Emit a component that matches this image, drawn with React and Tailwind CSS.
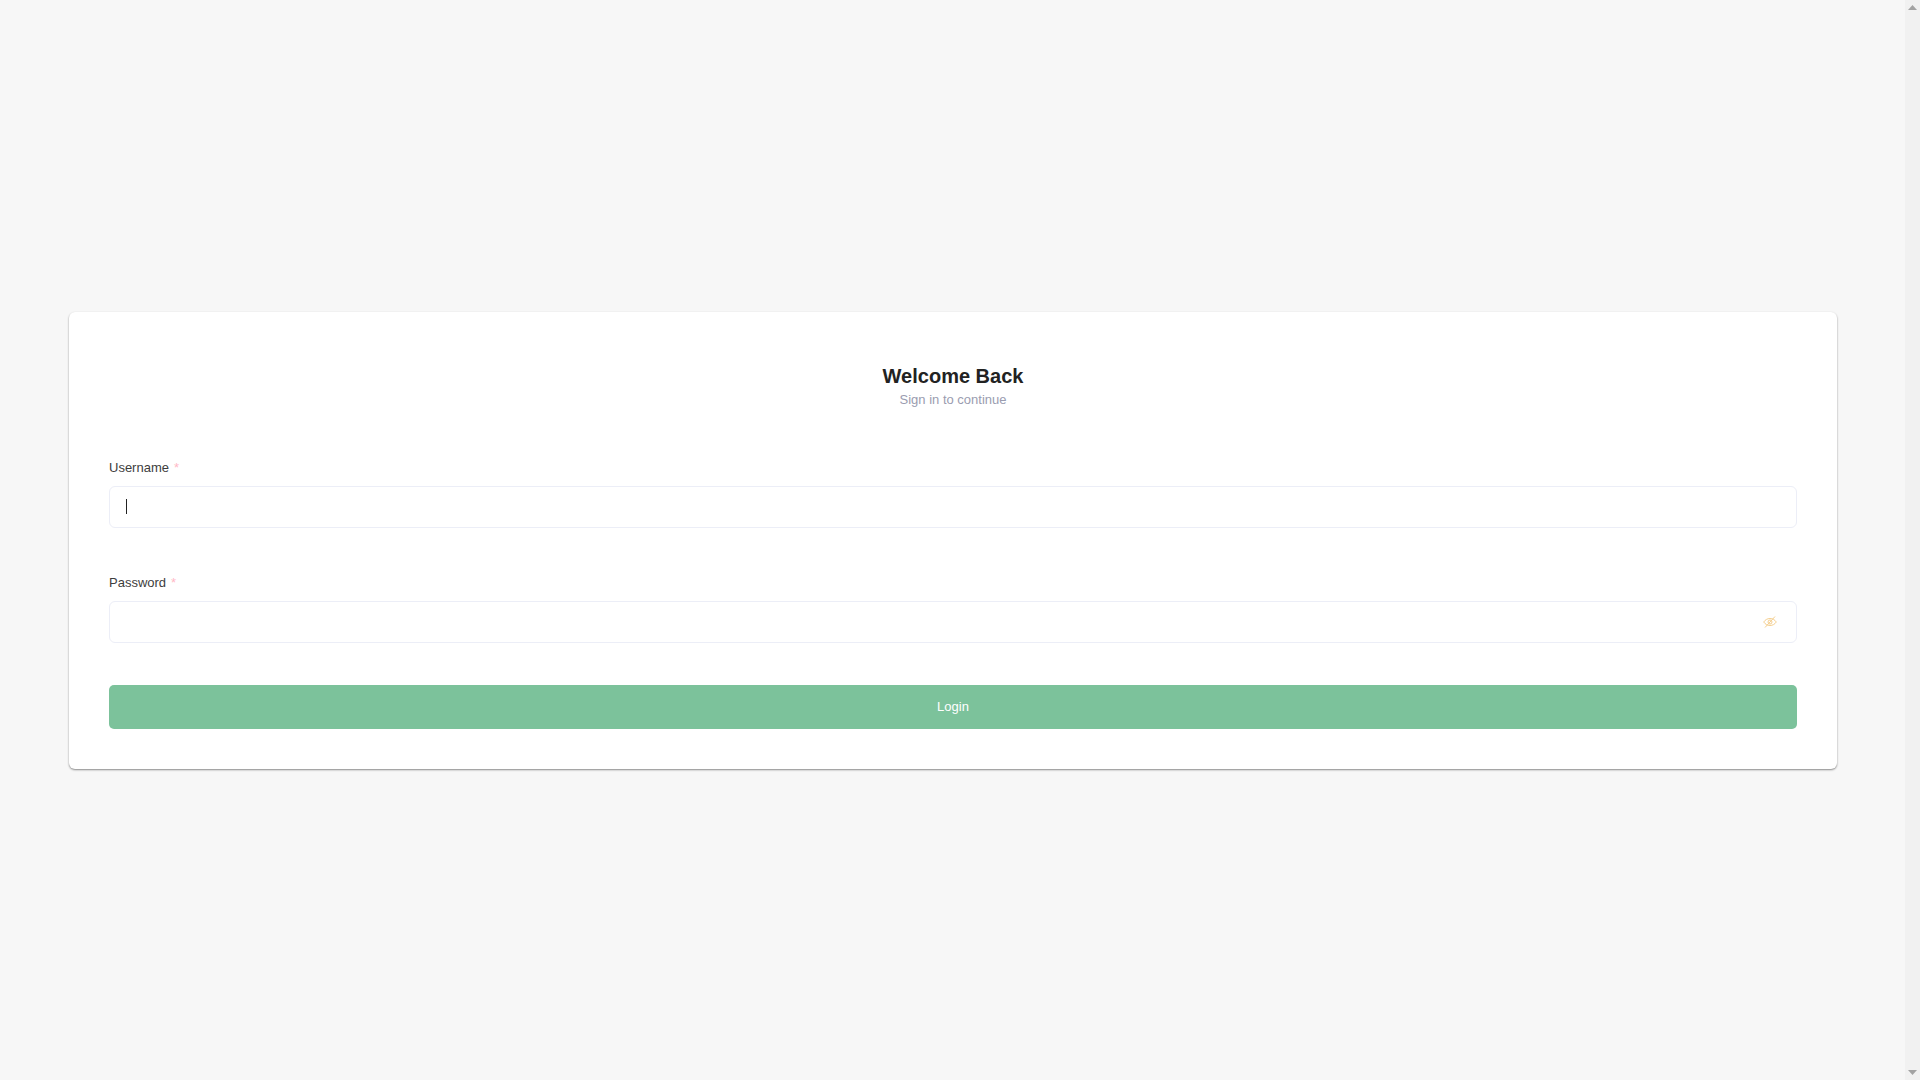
export default function App() {
  const font = { };
  return (
    <div className="flex h-screen w-full overflow-hidden bg-[#f7f7f7] font-['Liberation_Sans',Arial,sans-serif]">
      <main className="flex min-w-0 flex-1 items-center pl-[69px] pr-[68px]">
        <div className="w-full rounded-md bg-white px-10 pb-10 pt-[50px] shadow-[0_1px_2px_rgba(0,0,0,0.45)]">
          <div className="mb-12 text-center">
            <h1 className="text-[20px] font-bold leading-7 text-[#222222]">Welcome Back</h1>
            <p className="text-[13px] leading-5 text-[#9a9cb0]">Sign in to continue</p>
          </div>
          <form>
            <div className="mb-[45px]">
              <label className="mb-2 flex h-5 items-center text-[13px] leading-5 text-[#3d3d3d]">
                Username
                <span className="ml-[5px] text-[13px] text-[#ffb8c6]">*</span>
              </label>
              <div className="flex h-[42px] items-center rounded-md border border-[#eceef7] bg-white px-4">
                <span className="h-[15px] w-px bg-[#222222]" />
              </div>
            </div>
            <div className="mb-[42px]">
              <label className="mb-2 flex h-5 items-center text-[13px] leading-5 text-[#3d3d3d]">
                Password
                <span className="ml-[5px] text-[13px] text-[#ffb8c6]">*</span>
              </label>
              <div className="flex h-[42px] items-center justify-end rounded-md border border-[#eceef7] bg-white pr-[19px]">
                <svg width="14" height="14" viewBox="0 0 14 14" fill="none" stroke="#f5cf8f" strokeWidth="1">
                  <path d="M0.7 7C2.2 4.8 4.4 3.5 7 3.5S11.8 4.8 13.3 7C11.8 9.2 9.6 10.5 7 10.5S2.2 9.2 0.7 7Z" />
                  <circle cx="7" cy="7" r="2" />
                  <path d="M2 12.5L12 1.5" />
                </svg>
              </div>
            </div>
            <button type="button" className="block h-11 w-full rounded-[5px] bg-[#7cc29b] text-center text-[13px] text-white">
              Login
            </button>
          </form>
        </div>
      </main>
      <div className="flex w-[15px] shrink-0 flex-col items-center justify-between bg-[#f1f1f1] py-[5px]">
        <svg width="9" height="5" viewBox="0 0 9 5" fill="#a3a3a3"><path d="M4.5 0L9 5H0Z" /></svg>
        <svg width="9" height="5" viewBox="0 0 9 5" fill="#a3a3a3"><path d="M0 0H9L4.5 5Z" /></svg>
      </div>
    </div>
  );
}
